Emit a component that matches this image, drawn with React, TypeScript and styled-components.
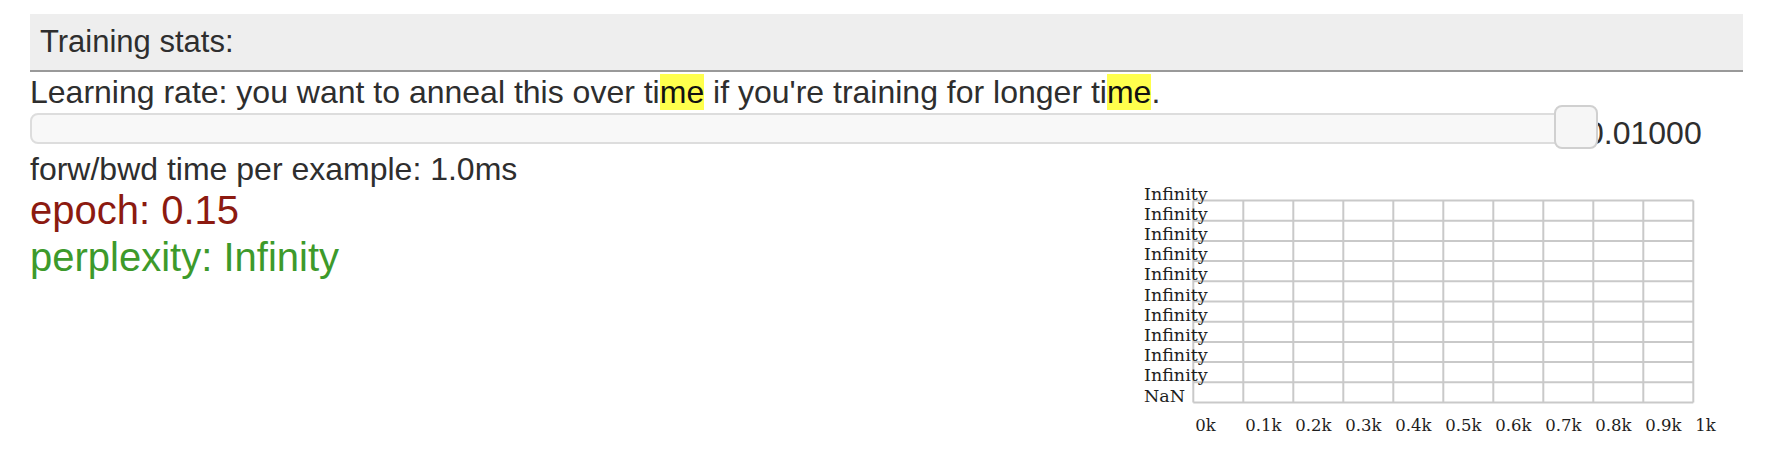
import React from "react";
import styled, { createGlobalStyle } from "styled-components";

const GlobalStyle = createGlobalStyle`
  html, body {
    margin: 0;
    padding: 0;
    background: #ffffff;
  }
  body {
    font-family: "Liberation Sans", Arial, sans-serif;
    color: #2e2e2e;
  }
`;

const Page = styled.div`
  padding: 14px 25px 0 30px;
`;

const Band = styled.div`
  height: 56px;
  background: #eeeeee;
  border-bottom: 2px solid #999999;
  display: flex;
  align-items: center;
  padding-left: 10px;
  font-size: 31px;
  line-height: 36px;
`;

const TextLine = styled.div`
  font-size: 32px;
  line-height: 36px;
  white-space: nowrap;
`;

const LearnLine = styled(TextLine)`
  margin-top: 1.6px;
`;

const Mark = styled.span`
  background: #ffff4d;
  color: #111;
`;

const SliderRow = styled.div`
  display: flex;
  align-items: baseline;
  font-size: 32px;
  line-height: 36px;
`;

const Track = styled.div`
  position: relative;
  flex: none;
  width: 1556px;
  height: 31px;
  box-sizing: border-box;
  margin-top: 3px;
  border: 2px solid #dddddd;
  border-radius: 8px;
  background: #f8f8f8;
`;

const Thumb = styled.div`
  position: absolute;
  right: -14px;
  top: -10px;
  width: 44px;
  height: 44px;
  box-sizing: border-box;
  border: 2px solid #d0d0d0;
  border-radius: 8px;
  background: #f6f6f6;
`;

const Value = styled.span`
  white-space: nowrap;
`;

const StatsRow = styled.div`
  display: grid;
  grid-template-columns: 1fr 599px;
  align-items: start;
`;

const StatCol = styled.div`
  display: flex;
  flex-direction: column;
`;

const Stat = styled.div<{ $color: string }>`
  font-size: 40px;
  line-height: 47px;
  color: ${(p) => p.$color};
  white-space: nowrap;
`;

const ChartSvg = styled.svg`
  display: block;
  margin-top: -6px;
  overflow: visible;
`;

const GX0 = 49.3;
const COLW = 50;
const GY0 = 19.5;
const ROWH = 20.2;

function Chart() {
  const cols = Array.from({ length: 11 }, (_, i) => i);
  const rows = Array.from({ length: 11 }, (_, j) => j);
  const gridBottom = GY0 + 10 * ROWH;
  const gridRight = GX0 + 10 * COLW;
  return (
    <ChartSvg width={599} height={262} viewBox="0 0 599 262">
      <g stroke="#c9c9c9" strokeWidth={2} fill="none">
        {cols.map((i) => (
          <line
            key={"v" + i}
            x1={GX0 + i * COLW}
            y1={GY0}
            x2={GX0 + i * COLW}
            y2={gridBottom}
          />
        ))}
        {rows.map((j) => (
          <line
            key={"h" + j}
            x1={GX0}
            y1={GY0 + j * ROWH}
            x2={gridRight}
            y2={GY0 + j * ROWH}
          />
        ))}
      </g>
      <g fontFamily='"DejaVu Serif", "Liberation Serif", serif' fontSize={17.5} fill="#1e1e1e">
        {rows.map((j) => (
          <text key={"yl" + j} x={0} y={GY0 + j * ROWH - 1}>
            {j < 10 ? "Infinity" : "NaN"}
          </text>
        ))}
        {cols.map((i) => (
          <text key={"xl" + i} x={GX0 + i * COLW + 2} y={249.5} fontSize={16.5}>
            {i === 0 ? "0k" : i === 10 ? "1k" : `0.${i}k`}
          </text>
        ))}
      </g>
    </ChartSvg>
  );
}

export default function App() {
  return (
    <>
      <GlobalStyle />
      <Page>
        <Band>Training stats:</Band>
        <LearnLine>
          Learning rate: you want to anneal this over ti<Mark>me</Mark> if you're training for longer ti<Mark>me</Mark>.
        </LearnLine>
        <SliderRow>
          <Track>
            <Thumb />
          </Track>
          <Value>0.01000</Value>
        </SliderRow>
        <TextLine>forw/bwd time per example: 1.0ms</TextLine>
        <StatsRow>
          <StatCol>
            <Stat $color="#8c1a10">epoch: 0.15</Stat>
            <Stat $color="#3d9a2b">perplexity: Infinity</Stat>
          </StatCol>
          <Chart />
        </StatsRow>
      </Page>
    </>
  );
}
